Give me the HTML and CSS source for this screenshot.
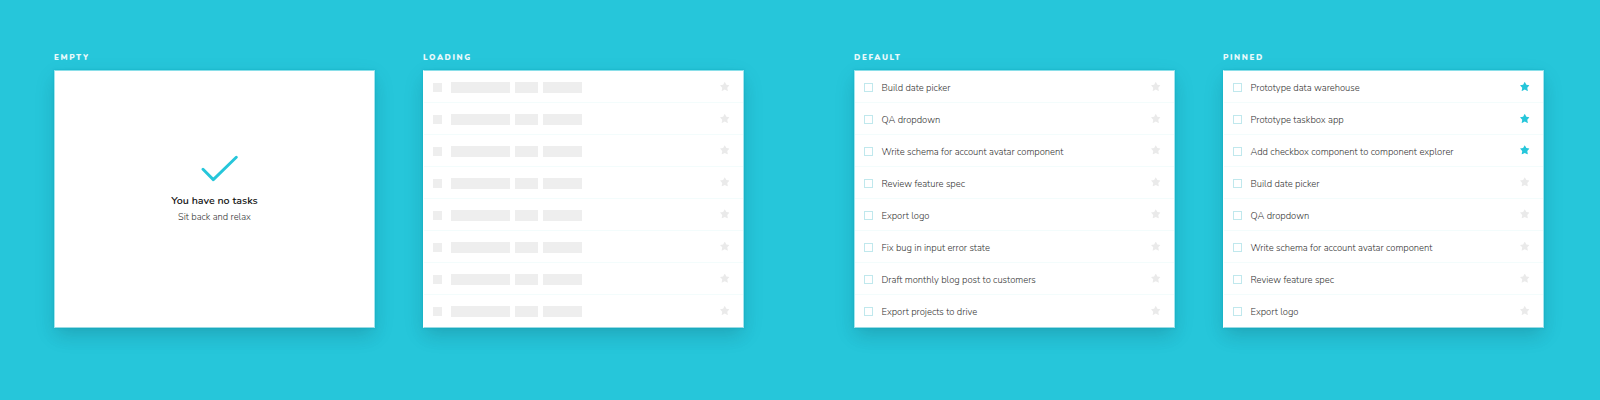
FILE: index.html
```html
<!DOCTYPE html>
<html lang="en">
<head>
<meta charset="utf-8">
<title>Taskbox states</title>
<link rel="stylesheet" href="styles.css">
</head>
<body>
<svg class="defs" width="0" height="0" aria-hidden="true">
  <symbol id="star" viewBox="0 0 20 20"><path d="M10 .3l3.400 6.200 6.600.9-4.700 5.100 1.300 7.400L10 16.600l-6.600 3.300 1.300-7.400L0 7.400l6.600-.9z"/></symbol>
</svg>
<main class="board">
  <section class="state">
    <h2 class="label">EMPTY</h2>
    <div class="card empty">
      <svg class="check" width="40" height="28" viewBox="0 0 40 28"><path d="M5 14.300 15.300 24.600 38.300 2.300"/></svg>
      <p class="title">You have no tasks</p>
      <p class="subtitle">Sit back and relax</p>
    </div>
  </section>
  <section class="state">
    <h2 class="label">LOADING</h2>
    <ul class="card flush" id="loading"></ul>
  </section>
  <section class="state second">
    <h2 class="label">DEFAULT</h2>
    <ul class="card" id="default"></ul>
  </section>
  <section class="state">
    <h2 class="label">PINNED</h2>
    <ul class="card flush" id="pinned"></ul>
  </section>
</main>
<script src="tasks.js"></script>
</body>
</html>
```
FILE: styles.css
```css
* { box-sizing: border-box; }
body {
  margin: 0;
  width: 1600px;
  height: 400px;
  overflow: hidden;
  background: #26c6da;
  font-family: Nunito, "Nunito Sans", Lato, "Open Sans", sans-serif;
}
.defs { position: absolute; }
.board { display: flex; padding: 52px 0 0 54px; }
.state { width: 321px; margin-right: 48px; }
.second { margin-left: 62px; }
.label {
  margin: 0;
  height: 18px;
  font-size: 8px;
  line-height: 12px;
  font-weight: 900;
  letter-spacing: 1.600px;
  color: #e9f9fb;
}
.card {
  margin: 0;
  padding: 0;
  list-style: none;
  height: 258px;
  background: #fff;
  border: 1px solid #a3e5ee;
  border-top-color: #8adfe9;
  border-bottom-color: #9adbe4;
  box-shadow: 0 0 2px rgba(0, 160, 180, .6), 0 10px 16px -4px rgba(30, 70, 80, .16), 0 7px 20px rgba(0, 80, 100, .1);
}
.flush { border-left-color: #fff; }
.row {
  display: flex;
  align-items: center;
  height: 32px;
  padding: 1px 13.500px 0 9px;
  border-bottom: 1px solid #f3fcfc;
}
.row:last-child { border-bottom-color: transparent; }
.box { width: 9px; height: 9px; border: 1px solid #c0e8ed; margin-right: 8.500px; }
.name { margin-top: 1px; font-size: 9.380px; line-height: 14px; font-weight: 300; color: #333; white-space: nowrap; }
.star { width: 9.500px; height: 9.500px; margin-left: auto; fill: #eaeaea; transform: translateY(-.3px); }
.row:nth-child(n+3):nth-child(-n+5) .star { transform: translateY(-1px); }
.row:nth-child(6) .star, .row:nth-child(7) .star { transform: translateY(-.6px); }
.star.on { fill: #26c6da; }
.bone { background: #eee; height: 11px; margin-right: 5px; }
.bone.tick { width: 8.500px; height: 9px; margin-right: 9px; }
.bone.long { width: 59px; }
.bone.short { width: 23px; }
.bone.mid { width: 39px; }
.empty { display: flex; flex-direction: column; align-items: center; padding-top: 84px; }
.check { margin-left: 7px; fill: none; stroke: #26c6da; stroke-width: 2.900; stroke-linecap: round; stroke-linejoin: round; }
.title, .subtitle { margin: 0; white-space: nowrap; }
.title { margin-top: 10px; font-size: 10.667px; line-height: 16px; font-weight: 600; color: #111; }
.subtitle { font-size: 9.333px; line-height: 16px; font-weight: 300; color: #333; }
```
FILE: tasks.js
```js
const star = (on) => `<svg class="star${on ? ' on' : ''}"><use href="#star"/></svg>`;
const row = (name, on) => `<li class="row"><span class="box"></span><span class="name">${name}</span>${star(on)}</li>`;

const tasks = [
  'Build date picker', 'QA dropdown', 'Write schema for account avatar component',
  'Review feature spec', 'Export logo', 'Fix bug in input error state',
  'Draft monthly blog post to customers', 'Export projects to drive',
];
const pinned = ['Prototype data warehouse', 'Prototype taskbox app', 'Add checkbox component to component explorer'];
const skeleton = `<li class="row"><span class="bone tick"></span><span class="bone long"></span><span class="bone short"></span><span class="bone mid"></span>${star(false)}</li>`;

document.getElementById('loading').innerHTML = skeleton.repeat(8);
document.getElementById('default').innerHTML = tasks.map((t) => row(t, false)).join('');
document.getElementById('pinned').innerHTML =
  pinned.map((t) => row(t, true)).join('') + tasks.slice(0, 5).map((t) => row(t, false)).join('');
```
